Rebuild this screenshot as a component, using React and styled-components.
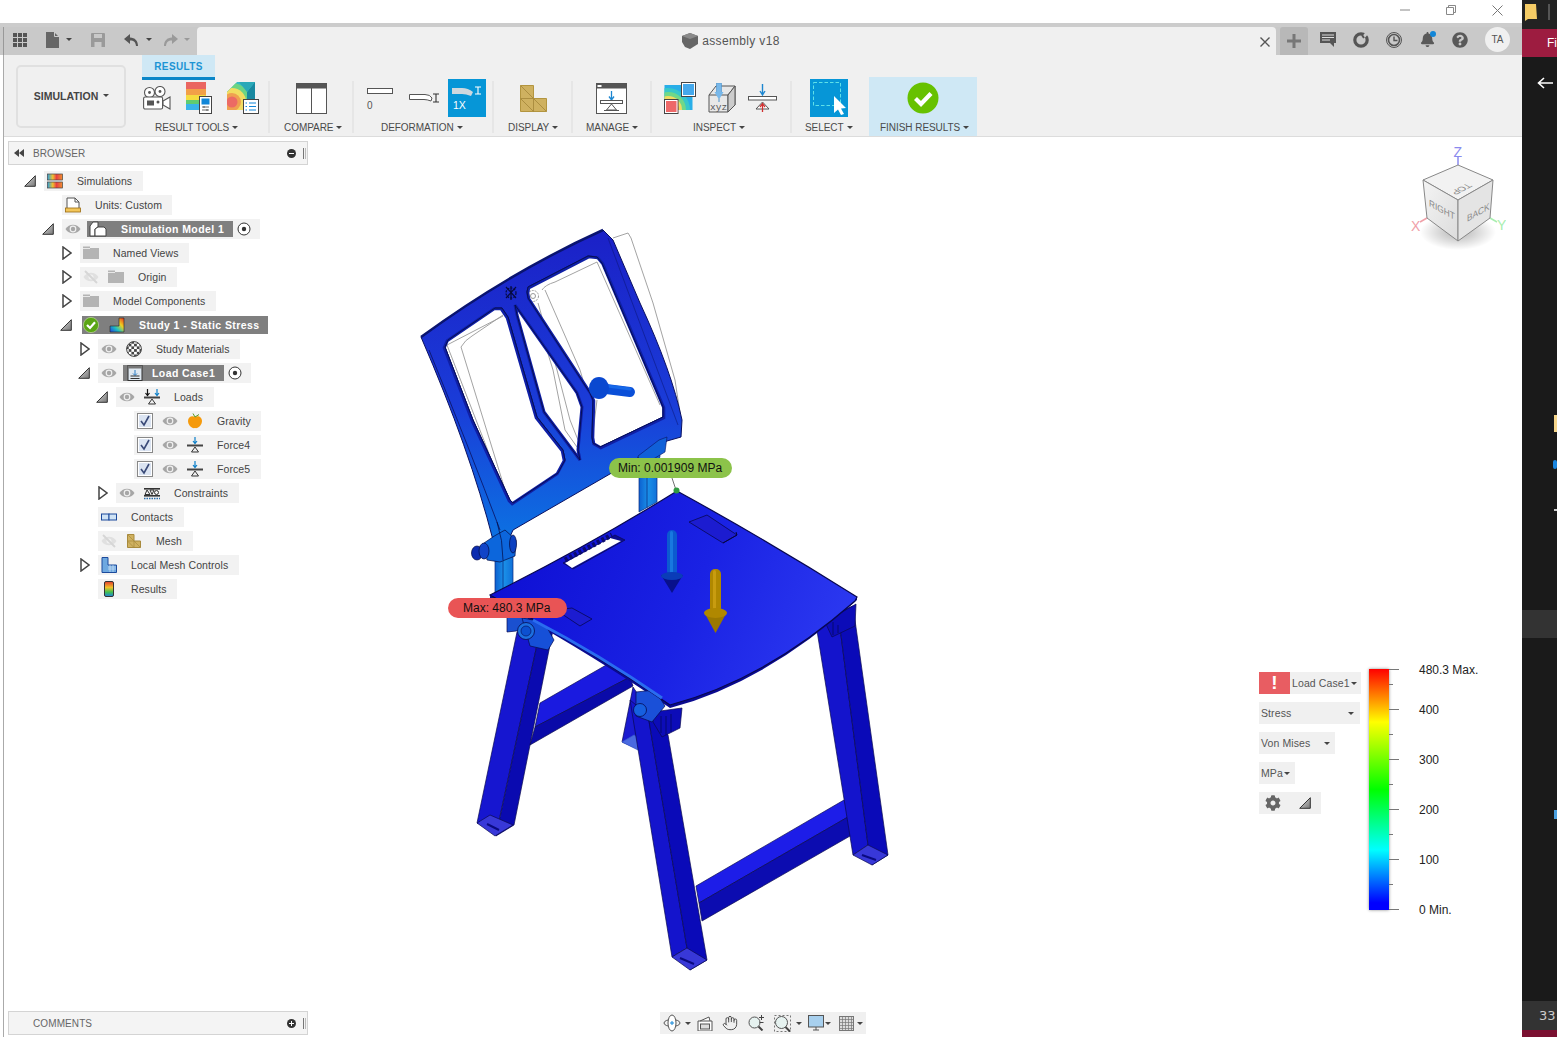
import React from 'react';
import styled, { createGlobalStyle } from 'styled-components';
import { Hand } from 'lucide-react';
import { FaCog, FaQuestionCircle, FaBell } from 'react-icons/fa';

const GlobalStyle = createGlobalStyle`
  html, body { margin: 0; padding: 0; background: #fff; overflow: hidden; }
  body { font-family: "Liberation Sans", Arial, sans-serif; color: #444; }
  * { box-sizing: border-box; }
`;

/* ---------- small icons ---------- */

const Svg = ({ w = 16, h = 16, vb, children }) => (
  <svg width={w} height={h} viewBox={vb || `0 0 ${w} ${h}`} style={{ display: 'block', flex: 'none' }}>{children}</svg>
);

const TriOpen = () => (
  <Svg w={12} h={12}>
    <defs>
      <linearGradient id="tri" x1="0" y1="0" x2="1" y2="1">
        <stop offset="0" stopColor="#ddd" />
        <stop offset="1" stopColor="#777" />
      </linearGradient>
    </defs>
    <polygon points="0.7,11.3 11.3,0.7 11.3,11.3" fill="url(#tri)" stroke="#333" strokeWidth="1" />
  </Svg>
);
const TriClosed = () => (
  <Svg w={10} h={14}>
    <polygon points="1,1 1,13 9,7" fill="#fff" stroke="#444" strokeWidth="1.5" />
  </Svg>
);
const Eye = () => (
  <Svg>
    <path d="M0.5 8 C4 2.2 12 2.2 15.5 8 C12 13.8 4 13.8 0.5 8Z" fill="#a6a6a6" />
    <circle cx="8" cy="8" r="3.4" fill="#f0f0f0" />
    <circle cx="8" cy="8" r="2.2" fill="#a6a6a6" />
  </Svg>
);
const EyeOff = () => (
  <Svg>
    <path d="M0.5 8 C4 2.2 12 2.2 15.5 8 C12 13.8 4 13.8 0.5 8Z" fill="#e0e0e0" />
    <circle cx="8" cy="8" r="2.5" fill="#f0f0f0" />
    <path d="M2 2 L14 14" stroke="#d6d6d6" strokeWidth="2" />
  </Svg>
);
const Folder = () => (
  <Svg>
    <path d="M0 1.5 H7 V3 H16 V14 H0Z" fill="#b4b4b4" />
    <path d="M0 3.5 H7" stroke="#e8e8e8" />
  </Svg>
);
const SimIcon = () => (
  <Svg>
    <defs>
      <linearGradient id="simg" x1="0" x2="1" y1="0" y2="0">
        <stop offset="0" stopColor="#2aa0e0" />
        <stop offset=".35" stopColor="#f0c030" />
        <stop offset=".6" stopColor="#e84040" />
        <stop offset="1" stopColor="#f09030" />
      </linearGradient>
    </defs>
    <rect x="0.5" y="1" width="15" height="6" fill="url(#simg)" stroke="#444" strokeWidth=".7" />
    <rect x="0.5" y="9" width="15" height="6" fill="url(#simg)" stroke="#444" strokeWidth=".7" />
  </Svg>
);
const UnitsIcon = () => (
  <Svg>
    <path d="M2 11 V1 H10 L14 5 V11" fill="#fff" stroke="#555" />
    <path d="M10 1 V5 H14" fill="none" stroke="#555" />
    <rect x="0.5" y="11" width="15" height="4" fill="#f3c65a" stroke="#9a6a10" strokeWidth=".8" />
  </Svg>
);
const BodyIcon = () => (
  <Svg w={18} h={16}>
    <path d="M1 5 L4 1 H9 V6 L6 8 V15 H1Z" fill="#fff" stroke="#444" />
    <path d="M6 8 L9 6 H15 L17 8 V15 H6Z" fill="#fff" stroke="#444" />
  </Svg>
);
const StudyCheck = () => (
  <Svg>
    <circle cx="8" cy="8" r="7.6" fill="#5aa514" stroke="#cde6a8" strokeWidth=".6" />
    <path d="M4 8 L7 11 L12 5.2" fill="none" stroke="#fff" strokeWidth="2.2" />
  </Svg>
);
const StudyIcon = () => (
  <Svg>
    <defs>
      <linearGradient id="stg" x1="0" x2="1" y1="1" y2="0">
        <stop offset="0" stopColor="#2040e0" />
        <stop offset=".35" stopColor="#20c0c0" />
        <stop offset=".65" stopColor="#f0d020" />
        <stop offset="1" stopColor="#e83020" />
      </linearGradient>
    </defs>
    <path d="M10 1 H15 V15 H1 V9 H10Z" fill="url(#stg)" stroke="#222" strokeWidth=".6" />
  </Svg>
);
const MaterialIcon = () => (
  <Svg>
    <defs>
      <pattern id="chk" width="5.4" height="5.4" patternUnits="userSpaceOnUse">
        <rect width="5.4" height="5.4" fill="#fff" />
        <rect width="2.7" height="2.7" fill="#444" />
        <rect x="2.7" y="2.7" width="2.7" height="2.7" fill="#444" />
      </pattern>
    </defs>
    <circle cx="8" cy="8" r="7.4" fill="url(#chk)" stroke="#444" />
  </Svg>
);
const LoadCaseIcon = () => (
  <Svg>
    <rect x="1" y="0.5" width="14" height="15" fill="#dfe8f0" stroke="#333" />
    <rect x="1" y="0.5" width="14" height="3" fill="#777" />
    <path d="M8 5 V10 M6 8.5 L8 10.5 L10 8.5" stroke="#2b7cc4" fill="none" />
    <path d="M3.5 11 H12.5 M3.5 13.5 H12.5" stroke="#333" />
  </Svg>
);
const LoadsIcon = ({ double }) => (
  <Svg>
    {double && <path d="M3.5 0 V6 M1.5 4 L3.5 6.5 L5.5 4" stroke="#111" fill="none" strokeWidth="1.2" />}
    <path d={double ? 'M13 0 V6 M11 4 L13 6.5 L15 4' : 'M8 0 V6 M6 4 L8 6.5 L10 4'} stroke="#0c7fc8" fill="none" strokeWidth="1.2" />
    <rect x="0" y="7.5" width="16" height="2" fill="#444" />
    <path d="M8 10 L4.5 15 H11.5Z" fill="#f0f0f0" stroke="#333" />
  </Svg>
);
const AppleIcon = () => (
  <Svg>
    <path d="M8 4 C11 2 15 4 15 8 C15 12 11 16 8 15 C5 16 1 12 1 8 C1 4 5 2 8 4Z" fill="#f59a0c" />
    <path d="M8 4 L6 0.5 M8 4 L12 1.5" stroke="#5a9a20" strokeWidth="1" />
  </Svg>
);
const ConstraintIcon = () => (
  <Svg>
    <rect x="0" y="3" width="16" height="1.6" fill="#333" />
    <rect x="0" y="10" width="16" height="1.6" fill="#333" />
    <path d="M3 5 L1 9.5 H6Z M8 9.5 L6 5 H10Z" fill="none" stroke="#333" />
    <circle cx="12.5" cy="7.5" r="2" fill="none" stroke="#333" />
    <path d="M0 13.5 H16" stroke="#2b6ca8" strokeDasharray="1.5 1" strokeWidth="1.5" />
  </Svg>
);
const ContactIcon = () => (
  <Svg>
    <rect x="0.5" y="5" width="7.5" height="6" fill="#cfe3f5" stroke="#1c4a9c" />
    <rect x="8" y="5" width="7.5" height="6" fill="#cfe3f5" stroke="#1c4a9c" />
  </Svg>
);
const MeshSmall = () => (
  <Svg w={14} h={14}>
    <path d="M0.5 0.5 H7 V7 H13.5 V13.5 H0.5Z" fill="#cfb160" stroke="#a88a3c" />
    <path d="M0.5 7 H7 V13.5 M0.5 0.5 L7 7 L13.5 13.5 M0.5 7 L7 13.5" stroke="#a88a3c" fill="none" strokeWidth=".7" />
  </Svg>
);
const LocalMeshIcon = () => (
  <Svg>
    <path d="M1 0.5 H7 V8 H15.5 V15.5 H1Z" fill="#6ea8e0" stroke="#1c4a9c" />
    <path d="M7 10 H15 M7 12 H15 M9 8 V15 M12 8 V15" stroke="#cfe3f5" strokeWidth=".7" />
  </Svg>
);
const ResultsIcon = () => (
  <Svg w={10} h={16}>
    <defs>
      <linearGradient id="resg" x1="0" x2="0" y1="0" y2="1">
        <stop offset="0" stopColor="#e23a2e" />
        <stop offset=".4" stopColor="#f0c028" />
        <stop offset=".7" stopColor="#40c050" />
        <stop offset="1" stopColor="#2080e0" />
      </linearGradient>
    </defs>
    <rect x=".5" y=".5" width="9" height="15" rx="1.5" fill="url(#resg)" stroke="#333" />
  </Svg>
);
const Radio = () => (
  <Svg w={14} h={14}>
    <circle cx="7" cy="7" r="6" fill="#fff" stroke="#333" />
    <circle cx="7" cy="7" r="2.2" fill="#333" />
  </Svg>
);
const CheckBox = () => (
  <Svg>
    <rect x=".5" y=".5" width="15" height="15" fill="#fff" stroke="#888" />
    <rect x="2" y="2" width="12" height="12" fill="#dbe4f2" />
    <path d="M4 8 L7 12 L12 3" fill="none" stroke="#3a4a78" strokeWidth="1.6" />
  </Svg>
);

/* ---------- ribbon icons ---------- */

const CameraIcon = () => (
  <Svg w={28} h={25}>
    <g fill="#fff" stroke="#555" strokeWidth="1.1">
      <circle cx="6.5" cy="6.5" r="5" />
      <circle cx="17" cy="5.5" r="5" />
      <rect x="0.6" y="11" width="19" height="12" rx="1.5" />
      <path d="M20 15 L27 11 V23 L20 19Z" />
    </g>
    <circle cx="6.5" cy="6.5" r="1.4" fill="#555" />
    <circle cx="17" cy="5.5" r="1.4" fill="#555" />
    <rect x="4" y="14.5" width="7" height="5" fill="#555" />
    <circle cx="15" cy="16" r="1.5" fill="#555" />
  </Svg>
);
const LegendIcon = () => (
  <Svg w={26} h={32}>
    <rect x="0" y="0" width="20" height="7" fill="#ea6560" />
    <rect x="0" y="7" width="20" height="6" fill="#f2a048" />
    <rect x="0" y="13" width="20" height="5" fill="#f5dc40" />
    <rect x="0" y="18" width="20" height="4" fill="#60cc70" />
    <rect x="0" y="22" width="20" height="6" fill="#38b4ea" />
    <rect x="13.5" y="14.5" width="12" height="17" fill="#fff" stroke="#444" />
    <rect x="15.5" y="16.5" width="8" height="6" fill="#1186d8" />
    <path d="M16 25 H23 M16 28 H23 M18 24 V26 M21 27 V29" stroke="#444" strokeWidth=".8" />
  </Svg>
);
const ContourIcon = () => (
  <Svg w={32} h={32}>
    <defs>
      <clipPath id="ctc">
        <path d="M0 10 L10 0 H28 V22 L20 28 H0Z" />
      </clipPath>
    </defs>
    <g clipPath="url(#ctc)">
      <rect width="32" height="32" fill="#34bcc8" />
      <circle cx="5" cy="20" r="19" fill="#6cd484" />
      <circle cx="5" cy="20" r="14" fill="#f2dc60" />
      <circle cx="5" cy="20" r="9" fill="#f0a050" />
      <circle cx="5" cy="20" r="5.5" fill="#ec6a64" />
      <path d="M28 0 V22 L20 28 V10Z" fill="#1888a0" />
      <path d="M12 0 H28 L20 10Z" fill="#2aa8b8" />
    </g>
    <rect x="16.5" y="17.5" width="15" height="14" fill="#fff" stroke="#444" />
    <path d="M22 21 H29 M22 24.5 H29 M22 28 H29" stroke="#1186d8" />
    <path d="M18.5 21 H20 M18.5 24.5 H20 M18.5 28 H20" stroke="#1186d8" />
  </Svg>
);
const CompareIcon = () => (
  <Svg w={31} h={31}>
    <rect x=".5" y=".5" width="30" height="30" fill="#fff" stroke="#555" />
    <rect x=".5" y=".5" width="30" height="5" fill="#555" />
    <path d="M15.5 5 V31" stroke="#555" />
  </Svg>
);
const DeformZero = () => (
  <Wrap0>
    <Svg w={27} h={7}><rect x=".5" y=".5" width="25" height="5" fill="#fff" stroke="#555" /></Svg>
    <span>0</span>
  </Wrap0>
);
const DeformBend = () => (
  <Svg w={31} h={10}>
    <path d="M.5 1.5 H16 Q21 1.5 23 5 L22 8 Q18 6.5 15 6.5 H.5Z" fill="#fff" stroke="#555" />
    <path d="M24 1 H30 M27 1 V9 M24 9 H30" stroke="#333" strokeWidth="1.1" fill="none" />
  </Svg>
);
const DeformOne = () => (
  <BlueTile $deform>
    <Svg w={38} h={38}>
      <path d="M4 9 H14 Q20 9 25 13 L23 17 Q18 15 14 15 H4Z" fill="#cfd8de" />
      <path d="M27 8 H33 M30 8 V15 M27 15 H33" stroke="#fff" strokeWidth="1.1" fill="none" />
      <text x="5" y="30" fontSize="10.5" fill="#fff" fontFamily="Liberation Sans">1X</text>
    </Svg>
  </BlueTile>
);
const MeshBig = () => (
  <Svg w={27} h={27}>
    <path d="M.5 .5 H13.5 V13.5 H26.5 V26.5 H.5Z" fill="#cfb160" stroke="#b3953f" />
    <path d="M.5 13.5 H13.5 V26.5 M.5 .5 L13.5 13.5 L26.5 26.5 M.5 13.5 L13.5 26.5" stroke="#a88a3c" fill="none" strokeWidth=".9" />
  </Svg>
);
const ManageIcon = () => (
  <Svg w={31} h={31}>
    <rect x=".5" y=".5" width="30" height="30" fill="#fff" stroke="#555" />
    <rect x=".5" y=".5" width="30" height="5" fill="#555" />
    <rect x="1.5" y="2" width="4" height="2" fill="#fff" />
    <path d="M15.5 8 V16 M13 13.5 L15.5 17 L18 13.5" fill="none" stroke="#1c86d0" strokeWidth="1.3" />
    <rect x="4.5" y="17.5" width="22" height="3" fill="#fff" stroke="#555" />
    <path d="M15.5 21 L10.5 27 H20.5Z" fill="#fff" stroke="#555" />
    <path d="M8 27.5 H23" stroke="#555" />
  </Svg>
);
const InspectMap = () => (
  <Svg w={32} h={32}>
    <defs>
      <clipPath id="inc"><rect x="0.5" y="3" width="28" height="25" /></clipPath>
    </defs>
    <g clipPath="url(#inc)">
      <rect width="32" height="32" fill="#28aee8" />
      <circle cx="4" cy="28" r="22" fill="#38c8c8" />
      <circle cx="4" cy="28" r="18" fill="#70d888" />
      <circle cx="4" cy="28" r="14" fill="#f2dc60" />
      <circle cx="4" cy="28" r="11" fill="#f0a050" />
    </g>
    <rect x="17.5" y=".5" width="14" height="14" fill="#44a8ec" stroke="#444" />
    <rect x="18.5" y="1.5" width="12" height="12" fill="none" stroke="#fff" />
    <rect x=".5" y="17.5" width="13.5" height="14" fill="#ee6868" stroke="#444" />
    <rect x="1.5" y="18.5" width="11.5" height="12" fill="none" stroke="#fff" />
  </Svg>
);
const InspectXyz = () => (
  <Svg w={28} h={30}>
    <path d="M1 12 L8 3 H27 V22 L20 29 H1Z" fill="#e8e8e8" stroke="#555" />
    <path d="M1 12 H20 V29 M20 12 L27 3" fill="none" stroke="#555" />
    <path d="M20 12 L27 3 V22 L20 29Z" fill="#ccc" stroke="#555" />
    <rect x="8.5" y="0" width="5" height="11" fill="#78b8ea" stroke="#4a90c8" strokeWidth=".6" />
    <path d="M6.5 9 H15.5 L12 15 H10Z" fill="#78b8ea" />
    <path d="M11 15 V19" stroke="#4a90c8" />
    <text x="2" y="27" fontSize="9.5" fill="#555" fontFamily="Liberation Mono">xyz</text>
  </Svg>
);
const InspectForce = () => (
  <Svg w={29} h={28}>
    <path d="M14.5 0 V10 M12 7 L14.5 11 L17 7" fill="none" stroke="#1c86d0" strokeWidth="1.4" />
    <rect x=".5" y="12.5" width="28" height="3.5" fill="#fff" stroke="#555" />
    <path d="M14.5 18 L8 25 H21Z" fill="#fff" stroke="#555" />
    <path d="M14.5 28 V20 M12 23 L14.5 19.5 L17 23" fill="none" stroke="#d03030" strokeWidth="1.3" />
  </Svg>
);
const SelectIcon = () => (
  <BlueTile>
    <Svg w={38} h={38}>
      <rect x="3.5" y="3.5" width="27" height="23" fill="none" stroke="#5fe0e8" strokeDasharray="3.5 2" />
      <path d="M24 17 V34 L28 30.5 L31 36 L34 35 L31 29.5 L36 29Z" fill="#fff" />
    </Svg>
  </BlueTile>
);
const FinishIcon = () => (
  <Svg w={32} h={32}>
    <circle cx="16" cy="16" r="15.5" fill="#67c100" />
    <path d="M8.5 16.5 L14 22 L24 11.5" fill="none" stroke="#fff" strokeWidth="4.2" />
  </Svg>
);

/* ---------- quick access ---------- */

const GridIcon = () => (
  <Svg w={14} h={14}>
    {[0, 5, 10].map((y) => [0, 5, 10].map((x) => <rect key={`${x}${y}`} x={x} y={y} width="4" height="4" fill="#555" />))}
  </Svg>
);
const DocIcon = () => (
  <Svg w={13} h={16}>
    <path d="M0 0 H8 L13 5 V16 H0Z" fill="#666" />
    <path d="M8.5 0 V4.5 H13" stroke="#ccc" fill="none" />
  </Svg>
);
const SaveIcon = () => (
  <Svg w={14} h={14}>
    <path d="M0 1 Q0 0 1 0 H13 Q14 0 14 1 V14 H0Z" fill="#9a9a9a" />
    <rect x="3" y="1" width="8" height="4" fill="#c9c9c9" />
    <rect x="3.5" y="9" width="7" height="5" fill="#c9c9c9" />
  </Svg>
);
const UndoIcon = ({ color, flip }) => (
  <Svg w={14} h={12}>
    <g transform={flip ? 'translate(14,0) scale(-1,1)' : undefined}>
      <path d="M6 0 L0 5 L6 10 V6.5 C10 6.5 11.5 8 12 12 L14 12 C14 7 11 3.5 6 3.5Z" fill={color} />
    </g>
  </Svg>
);

/* ---------- layout ---------- */

const Page = styled.div`
  width: 1557px;
  height: 1037px;
  display: flex;
  overflow: hidden;
`;
const Main = styled.div`
  width: 1522px;
  display: flex;
  flex-direction: column;
`;
const WindowBar = styled.div`
  height: 23px;
  background: #fff;
  display: flex;
  justify-content: flex-end;
  padding-right: 2px;
`;
const WinBtn = styled.div`
  width: 46px;
  display: flex;
  align-items: center;
  justify-content: center;
  padding-bottom: 3px;
`;
const TabBar = styled.div`
  height: 32px;
  flex: none;
  border-top: 4px solid #ccc;
  background: linear-gradient(to right, #c9c9c9 3px, #999 3px, #999 4px, #c9c9c9 4px);
  display: flex;
  align-items: stretch;
`;
const Quick = styled.div`
  width: 197px;
  display: flex;
  align-items: center;
  padding-left: 13px;
  padding-bottom: 3px;
`;
const QuickItem = styled.span`
  display: flex;
  align-items: center;
  margin-left: ${(p) => p.$ml || 0}px;
`;
const Caret = styled.i`
  display: inline-block;
  flex: none;
  width: 0;
  height: 0;
  border-left: ${(p) => p.$s || 3}px solid transparent;
  border-right: ${(p) => p.$s || 3}px solid transparent;
  border-top: ${(p) => (p.$s || 3) + 0.5}px solid ${(p) => p.$c || '#444'};
  margin-left: ${(p) => p.$ml ?? 3}px;
`;
const DocTab = styled.div`
  width: 1079px;
  background: #f0f0f0;
  border-radius: 4px 4px 0 0;
  display: flex;
  align-items: center;
  padding-left: 12px;
`;
const DocTitle = styled.div`
  flex: 1;
  display: flex;
  align-items: center;
  justify-content: center;
  gap: 4px;
  font-size: 12px;
  letter-spacing: 0.35px;
  color: #555;
  padding-bottom: 1px;
`;
const CloseTab = styled.div`
  width: 23px;
  display: flex;
  justify-content: center;
  padding-top: 2px;
`;
const PlusBtn = styled.div`
  width: 28px;
  margin-left: 4px;
  background: #b8b8b8;
  border-radius: 3px 3px 0 0;
  display: flex;
  align-items: center;
  justify-content: center;
`;
const TopIcons = styled.div`
  display: flex;
  align-items: center;
  padding-left: 3.5px;
  padding-bottom: 3px;
`;
const TopIcon = styled.div`
  width: 33px;
  display: flex;
  justify-content: center;
  color: #595959;
  position: relative;
`;
const Dot = styled.b`
  position: absolute;
  top: -1px;
  left: 19px;
  width: 6px;
  height: 6px;
  border-radius: 50%;
  background: #1186d8;
`;
const Avatar = styled.div`
  width: 25px;
  height: 25px;
  margin-left: 5px;
  border-radius: 50%;
  background: #f0f0f0;
  display: flex;
  align-items: center;
  justify-content: center;
  font-size: 10px;
  color: #555;
`;
const Body = styled.div`
  flex: 1;
  margin-left: 3px;
  border-left: 1px solid #aaa;
  display: flex;
  flex-direction: column;
  min-height: 0;
`;

/* ribbon */

const Ribbon = styled.div`
  height: 82px;
  flex: none;
  background: #f0f0f0;
  border-bottom: 1px solid #dcdcdc;
  display: flex;
  padding-left: 12px;
`;
const ModeButton = styled.div`
  width: 110px;
  height: 63px;
  margin-top: 10px;
  margin-right: 16px;
  padding: 0 0 2px 1px;
  border: 2px solid #e0e0e0;
  border-radius: 5px;
  display: flex;
  align-items: center;
  justify-content: center;
  font-size: 10.5px;
  font-weight: bold;
  color: #444;
`;
const RibbonBody = styled.div`
  display: flex;
  flex-direction: column;
`;
const ResultsTab = styled.div`
  width: 73px;
  height: 25px;
  margin-bottom: -3px;
  background: #cfe8f5;
  border-bottom: 3px solid #0a86c8;
  display: flex;
  align-items: center;
  justify-content: center;
  font-size: 10px;
  font-weight: bold;
  letter-spacing: 0.35px;
  color: #1c94d4;
  position: relative;
  z-index: 1;
`;
const Groups = styled.div`
  display: flex;
  height: 59px;
`;
const Group = styled.div`
  width: ${(p) => p.$w}px;
  position: relative;
  background: ${(p) => (p.$on ? '#cfe8f5' : 'transparent')};
  display: flex;
  flex-direction: column;
  &::after {
    content: '';
    display: ${(p) => (p.$last ? 'none' : 'block')};
    position: absolute;
    right: 0;
    top: 4px;
    bottom: 3px;
    width: 2px;
    background: #e6e6e6;
  }
`;
const IconRow = styled.div`
  height: 42px;
  display: flex;
  align-items: center;
  padding-left: ${(p) => p.$pl}px;
  gap: ${(p) => p.$gap || 0}px;
`;
const GroupLabel = styled.div`
  display: flex;
  align-items: center;
  height: 16px;
  padding-left: ${(p) => p.$pl}px;
  font-size: 10px;
  letter-spacing: -0.05px;
  color: #4a4a4a;
  white-space: nowrap;
`;
const BlueTile = styled.div`
  width: 38px;
  height: 38px;
  background: #0696d7;
  flex: none;
`;
const Wrap0 = styled.div`
  display: flex;
  flex-direction: column;
  font-size: 10px;
  color: #555;
  line-height: 11px;
  gap: 5px;
  padding-top: 3px;
`;

/* viewport */

const Viewport = styled.div`
  flex: 1;
  position: relative;
  background: #fff;
  overflow: hidden;
`;
const Scene = styled.svg`
  position: absolute;
  left: -4px;
  top: 0;
`;
const Panel = styled.div`
  position: absolute;
  left: 4px;
  top: 4px;
  width: 300px;
`;
const PanelHead = styled.div`
  height: 24px;
  display: flex;
  align-items: center;
  background: #f4f4f4;
  border: 1px solid #d4d4d4;
  font-size: 10px;
  letter-spacing: 0.1px;
  color: #666;
  padding-left: 5px;
`;
const HeadTitle = styled.span`
  flex: 1;
  padding-left: ${(p) => p.$pl}px;
`;
const Handle = styled.span`
  width: 3px;
  height: 11px;
  margin: 0 1px 0 7px;
  border-left: 1px solid #777;
  border-right: 1px solid #bbb;
`;
const Tree = styled.div`
  margin-top: 4px;
  padding-left: 18px;
`;
const Row = styled.div`
  height: 24px;
  display: flex;
  align-items: center;
  padding-left: ${(p) => p.$depth * 18}px;
`;
const Toggle = styled.div`
  width: 18px;
  height: 20px;
  flex: none;
  display: flex;
  align-items: center;
  justify-content: ${(p) => (p.$open ? 'flex-end' : 'flex-start')};
  padding-right: ${(p) => (p.$open ? 8 : 0)}px;
`;
const Chip = styled.div`
  height: ${(p) => (p.$dark ? 18 : 20)}px;
  display: flex;
  align-items: center;
  margin-left: ${(p) => (p.$dark ? 2 : 0)}px;
  padding: 0 ${(p) => (p.$dark ? 8 : p.$radio ? 8.5 : 10.5)}px 0 ${(p) => (p.$dark ? 1 : 3)}px;
  background: ${(p) => (p.$dark ? '#7f7f7f' : '#f2f2f2')};
  font-size: 10.5px;
  color: ${(p) => (p.$dark ? '#fff' : '#444')};
  font-weight: ${(p) => (p.$dark ? 'bold' : 'normal')};
  letter-spacing: ${(p) => (p.$dark ? '0.42px' : '0.08px')};
  white-space: nowrap;
`;
const Slot = styled.span`
  width: 16px;
  flex: none;
  display: flex;
  justify-content: center;
  margin-right: ${(p) => p.$gap ?? 9}px;
`;
const DarkLabel = styled.div`
  height: 16px;
  display: flex;
  align-items: center;
  background: #7f7f7f;
  color: #fff;
  font-weight: bold;
  letter-spacing: 0.42px;
  padding: 0 9px 0 ${(p) => p.$pl}px;
  margin-left: -3px;
  margin-right: 4px;
`;
const Pill = styled.div`
  position: absolute;
  left: ${(p) => p.$x - 4}px;
  top: ${(p) => p.$y - 137}px;
  width: ${(p) => p.$w}px;
  height: 20px;
  border-radius: 10px;
  background: ${(p) => p.$bg};
  display: flex;
  align-items: center;
  padding-left: ${(p) => p.$pad}px;
  font-size: 12px;
  color: #111;
`;
const CubeWrap = styled.svg`
  position: absolute;
  right: 16px;
  top: 5px;
`;

/* legend */

const Legend = styled.div`
  position: absolute;
  left: 1255px;
  top: 530px;
  display: flex;
`;
const LegendControls = styled.div`
  width: 110px;
  padding-top: 5px;
  display: flex;
  flex-direction: column;
  align-items: flex-start;
  gap: 8px;
`;
const LegendRow = styled.div`
  display: flex;
`;
const LegendBox = styled.div`
  width: ${(p) => p.$w}px;
  height: 22px;
  background: #f0f0f0;
  display: flex;
  align-items: center;
  justify-content: space-between;
  padding: 0 ${(p) => p.$pr ?? 6}px 0 ${(p) => p.$pl ?? 2}px;
  font-size: 10.5px;
  color: #555;
  letter-spacing: 0.1px;
  white-space: nowrap;
`;
const AlertBox = styled.div`
  width: 31px;
  height: 22px;
  background: #e85d62;
  display: flex;
  align-items: center;
  justify-content: center;
  color: #fff;
  font-weight: bold;
  font-size: 19px;
  flex: none;
`;
const Bar = styled.div`
  width: 20px;
  height: 241px;
  margin-top: 2px;
  background: linear-gradient(to bottom, #f00 0%, #ff8000 11%, #ff0 22%, #0f0 50%, #0ff 75%, #00f 97%, #00f 100%);
  box-shadow: 0 0 3px rgba(0, 0, 0, 0.45);
  flex: none;
`;
const Ticks = styled.div`
  position: relative;
  width: 30px;
`;
const Tick = styled.div`
  height: 1px;
  width: ${(p) => (p.$major ? 10 : 4)}px;
  background: #777;
  position: absolute;
  top: ${(p) => p.$y}px;
`;
const Scale = styled.div`
  height: 255px;
  margin-top: -4px;
  display: flex;
  flex-direction: column;
`;
const ScaleText = styled.div`
  height: ${(p) => p.$h}px;
  font-size: 12px;
  line-height: 14px;
  color: #222;
  white-space: nowrap;
`;

/* bottom bars */

const NavBar = styled.div`
  position: absolute;
  left: 656px;
  bottom: 3px;
  width: 206px;
  height: 22px;
  background: #f0f0f0;
  display: flex;
  align-items: center;
  padding-left: 3px;
`;
const NavItem = styled.span`
  display: flex;
  align-items: center;
  margin-right: ${(p) => p.$mr}px;
`;
const CommentsBar = styled(PanelHead)`
  position: absolute;
  left: 4px;
  bottom: 2px;
  width: 300px;
`;
const HeadSpacer = styled.span`
  width: 10px;
`;
const Nudge = styled.span`
  margin-left: ${(p) => p.$ml}px;
`;

/* right strip of the other window */

const Strip = styled.div`
  width: 35px;
  position: relative;
  background: #1a1a1a;
  display: flex;
  flex-direction: column;
  overflow: hidden;
`;
const StripTop = styled.div`
  height: 29px;
  background: #222;
  display: flex;
  align-items: center;
  gap: 11px;
  padding: 0 0 5px 3px;
`;
const StripBand = styled.div`
  height: 28px;
  background: #9d1c40;
  color: #fff;
  font-size: 12px;
  display: flex;
  align-items: center;
  padding-left: 25px;
`;
const StripBack = styled.div`
  margin: 20px 0 0 15px;
`;
const StripMark = styled.div`
  position: absolute;
  right: 0;
  top: ${(p) => p.$y}px;
  width: ${(p) => p.$w}px;
  height: ${(p) => p.$h}px;
  background: ${(p) => p.$c};
  border-radius: ${(p) => p.$r || 0}px;
`;
const StripStatus = styled.div`
  margin-top: auto;
  height: 29px;
  margin-bottom: 7px;
  background: #333;
  color: #ccc;
  font-size: 13px;
  font-family: "DejaVu Sans", sans-serif;
  display: flex;
  align-items: center;
  padding-left: 17px;
`;
const StripFoot = styled.div`
  position: absolute;
  left: 0;
  right: 0;
  bottom: 0;
  height: 7px;
  background: #7a1030;
`;

/* ---------- tree data ---------- */

const tree = [
  { d: 0, t: 'open', parts: [<SimIcon />], label: 'Simulations' },
  { d: 1, parts: [<UnitsIcon />], label: 'Units: Custom' },
  { d: 1, t: 'open', eye: 'on', dark: { pl: 5, gap: 15, icon: <BodyIcon /> }, label: 'Simulation Model 1' },
  { d: 2, t: 'closed', parts: [<Folder />], label: 'Named Views' },
  { d: 2, t: 'closed', eye: 'off', parts: [<Folder />], label: 'Origin' },
  { d: 2, t: 'closed', parts: [<Folder />], label: 'Model Components' },
  { d: 2, t: 'open', study: true, label: 'Study 1 - Static Stress' },
  { d: 3, t: 'closed', eye: 'on', parts: [<MaterialIcon />], label: 'Study Materials' },
  { d: 3, t: 'open', eye: 'on', dark: { pl: 6, gap: 9, icon: <LoadCaseIcon /> }, label: 'Load Case1' },
  { d: 4, t: 'open', eye: 'on', parts: [<LoadsIcon double />], label: 'Loads' },
  { d: 5, check: true, eye: 'on', parts: [<AppleIcon />], label: 'Gravity' },
  { d: 5, check: true, eye: 'on', parts: [<LoadsIcon />], label: 'Force4' },
  { d: 5, check: true, eye: 'on', parts: [<LoadsIcon />], label: 'Force5' },
  { d: 4, t: 'closed', eye: 'on', parts: [<ConstraintIcon />], label: 'Constraints' },
  { d: 3, parts: [<ContactIcon />], label: 'Contacts' },
  { d: 3, eye: 'off', parts: [<MeshSmall />], label: 'Mesh' },
  { d: 3, t: 'closed', parts: [<LocalMeshIcon />], label: 'Local Mesh Controls' },
  { d: 3, parts: [<ResultsIcon />], label: 'Results' },
];

const TreeRow = ({ row }) => (
  <Row $depth={row.d}>
    <Toggle $open={row.t === 'open'}>
      {row.t === 'open' && <TriOpen />}
      {row.t === 'closed' && <TriClosed />}
    </Toggle>
    {row.study ? (
      <Chip $dark>
        <Slot $gap={10}><StudyCheck /></Slot>
        <Slot $gap={14}><StudyIcon /></Slot>
        {row.label}
      </Chip>
    ) : (
      <Chip $radio={!!row.dark}>
        {row.check && <Slot><CheckBox /></Slot>}
        {row.eye && <Slot>{row.eye === 'on' ? <Eye /> : <EyeOff />}</Slot>}
        {row.dark ? (
          <>
            <DarkLabel $pl={row.dark.pl - 2}>
              <Slot $gap={row.dark.gap}>{row.dark.icon}</Slot>
              {row.label}
            </DarkLabel>
            <Radio />
          </>
        ) : (
          <>
            {row.parts.map((p, i) => <Slot key={i} $gap={14}>{p}</Slot>)}
            {row.label}
          </>
        )}
      </Chip>
    )}
  </Row>
);

/* ---------- chair drawing, page coordinates ---------- */

const Q = ({ pts, fill, stroke = '#0a0a50', sw = 0.7 }) => (
  <polygon points={pts} fill={fill} stroke={stroke} strokeWidth={sw} strokeLinejoin="round" />
);

const holeLeft = 'M445,347 L448,340 L495,308 L502,308 L508,317 L537,417 L563,450 L565,460 L558,473 L513,503 L510,500 L473,420 Z';
const holeRight = 'M527,292 L528,287 L588,256 L597,257 L602,263 L663,407 L663,417 L600,447 L593,443 L592,437 L593,400 L590,393 L528,298 Z';
const holeMid = 'M515,305 L577,393 L582,407 L578,450 L580,460 L562,436 L544,412 L517,315 Z';

const Chair = () => (
  <Scene width="1522" height="900" viewBox="0 137 1522 900">
    <defs>
      <linearGradient id="frameG" gradientUnits="userSpaceOnUse" x1="0" y1="240" x2="0" y2="540">
        <stop offset="0" stopColor="#1b22c8" />
        <stop offset=".55" stopColor="#1a3cd8" />
        <stop offset="1" stopColor="#0c72e2" />
      </linearGradient>
      <linearGradient id="seatG" gradientUnits="userSpaceOnUse" x1="520" y1="530" x2="830" y2="660">
        <stop offset="0" stopColor="#0f10d4" />
        <stop offset=".55" stopColor="#1a22e4" />
        <stop offset="1" stopColor="#2b38f0" />
      </linearGradient>
      <linearGradient id="postG" x1="0" x2="1" y1="0" y2="0">
        <stop offset="0" stopColor="#0c60d0" />
        <stop offset=".5" stopColor="#1a90e8" />
        <stop offset="1" stopColor="#1070d8" />
      </linearGradient>
    </defs>

    {/* undeformed ghost */}
    <g fill="none" stroke="#999" strokeWidth="0.9">
      <path d="M613,238 L628,233 L631,238 L653,303 L675,380 L680,413" />
      <path d="M542,290 Q545,285 555,282 L597,262 L660,405" />
      <path d="M447,345 L503,316 M461,347 Q465,340 472,336 L503,315" />
      <path d="M461,347 L506,493 M447,345 L507,500" />
      <path d="M533,305 L553,370 L565,430 L577,447 M538,303 L557,370 L570,420 L578,440" />
      <path d="M545,290 L580,370 L589,400 M597,400 L592,440" />
    </g>
    <g fill="none" stroke="#999" strokeWidth="1">
      <circle cx="533" cy="296" r="5.5" strokeDasharray="2 1" />
      <circle cx="533" cy="296" r="2.5" />
    </g>

    {/* back posts behind the seat */}
    <polygon points="495,555 513,548 513,596 495,600" fill="url(#postG)" stroke="#0a2a80" strokeWidth=".7" />
    <path d="M503,552 V598" stroke="#0a2a80" strokeWidth=".7" />
    <polygon points="639,470 657,470 657,502 639,512" fill="url(#postG)" stroke="#0a2a80" strokeWidth=".7" />
    <path d="M647,470 V508" stroke="#0a2a80" strokeWidth=".7" />
    <ellipse cx="648" cy="456" rx="12" ry="10" fill="#1060d8" stroke="#0a2a80" strokeWidth=".7" />
    <ellipse cx="651" cy="454" rx="6" ry="7" fill="#2a80e8" stroke="#0a2a80" strokeWidth=".5" />

    {/* back frame */}
    <path
      d={`M421,337 Q510,272 603,230 L613,240 L640,303 Q672,372 682,420 L681,437 L667,441 L513,530 L505,548 L493,540 Q470,450 421,337 Z ${holeLeft} ${holeRight} ${holeMid}`}
      fill="url(#frameG)"
      fillRule="evenodd"
      stroke="#0a1060"
      strokeWidth="1"
    />
    <polygon points="659,440 667,437 665,452 640,467 638,456" fill="#1060d8" stroke="#0a1060" strokeWidth=".6" />
    <g fill="none">
      <path d={holeLeft} stroke="#0f1fa6" strokeWidth="3" transform="translate(-.8,.8)" />
      <path d={holeRight} stroke="#0f1fa6" strokeWidth="3" transform="translate(.8,.8)" />
      <path d={holeMid} stroke="#0f1fa6" strokeWidth="3" />
      <path d={holeLeft} stroke="#050a40" strokeWidth=".8" />
      <path d={holeRight} stroke="#050a40" strokeWidth=".8" />
      <path d={holeMid} stroke="#050a40" strokeWidth=".8" />
      <path d="M421,337 Q510,272 603,230" stroke="#0a1470" strokeWidth="2.5" />
      <path d="M429,350 Q470,450 500,530" stroke="#0a1060" strokeWidth=".8" />
      <path d="M608,238 L678,425" stroke="#0a1470" strokeWidth="1" opacity=".5" />
    </g>

    {/* pinion */}
    <g fill="none" stroke="#050a40" strokeWidth="1.2">
      <circle cx="511" cy="293" r="5" strokeDasharray="2 1.2" />
      <path d="M506,287 L516,298 M516,287 L506,298 M511,286 V300" />
    </g>

    {/* handle */}
    <path d="M598,388 L630,392" stroke="#0a4fd8" strokeWidth="10" strokeLinecap="round" />
    <path d="M600,385 L630,389" stroke="#1668e8" strokeWidth="3" strokeLinecap="round" />
    <ellipse cx="599" cy="388" rx="10" ry="11" fill="#0a48d0" />

    {/* hub and knob on the left rail */}
    <path d="M484,543 Q495,535 505,530 L516,540 L515,556 L500,562 L487,560 Z" fill="#0c66dc" stroke="#050a40" strokeWidth=".7" />
    <ellipse cx="513" cy="544" rx="3.5" ry="9" fill="#0c40c0" stroke="#050a40" strokeWidth=".7" />
    <path d="M497,522 Q503,540 503,560" fill="none" stroke="#050a40" strokeWidth=".7" />
    <ellipse cx="477" cy="553" rx="5.5" ry="7" fill="#0c2cb0" stroke="#050a40" strokeWidth=".7" />
    <ellipse cx="484" cy="551" rx="5" ry="8" fill="#1044c8" stroke="#050a40" strokeWidth=".7" />

    {/* back crossbar */}
    <Q pts="540,703 608,664 630,677 535,727" fill="#1a1ae0" />
    <Q pts="535,727 630,677 633,686 530,745" fill="#0a0aa8" />

    {/* rear-left leg */}
    <Q pts="517,632 538,640 497,830 477,823" fill="#1616d0" />
    <Q pts="538,640 553,630 514,825 496,836" fill="#0a0ab0" />
    <Q pts="477,823 490,815 513,825 495,836" fill="#3838d8" />
    <path d="M487,824 L499,830" stroke="#0a0a80" strokeWidth="2" />

    {/* centre bracket */}
    <Q pts="633,687 622,742 640,750 655,720" fill="#1a1ad0" />
    <Q pts="622,742 634,735 652,745 640,751" fill="#4a6ae0" stroke="#3a5ad0" />

    {/* crossbar front */}
    <Q pts="696,886 844,800 860,810 699,903" fill="#1d1de8" />
    <Q pts="699,903 860,810 864,828 702,921" fill="#0c0cb0" />

    {/* right leg */}
    <Q pts="814,612 838,612 868,845 853,855" fill="#1414cc" />
    <Q pts="838,612 853,606 888,855 872,865 868,845" fill="#0a0ab8" />
    <Q pts="853,855 868,845 888,855 872,865" fill="#3838d8" />
    <path d="M862,855 L876,860" stroke="#0a0a80" strokeWidth="2" />

    {/* front leg */}
    <Q pts="630,700 648,715 687,948 672,957" fill="#1414cc" />
    <Q pts="648,715 668,735 707,960 690,970 687,948" fill="#0a0ab8" />
    <Q pts="672,957 687,948 707,960 690,970" fill="#3838d8" />
    <path d="M680,958 L694,964" stroke="#0a0a80" strokeWidth="2" />

    {/* seat underside */}
    <Q pts="653,712 682,708 680,728 662,737 653,722" fill="#0c0cb8" />
    <path d="M661,716 V733 M666,716 V735 M671,714 V732" stroke="#050a50" strokeWidth=".7" />
    <Q pts="825,622 856,604 855,626 832,637" fill="#0c0cb8" />
    <path d="M838,625 V633 M833,622 V635" stroke="#050a50" strokeWidth=".7" />
    <path d="M490,598 Q590,653 670,708 Q765,683 857,600 L857,597 L490,595 Z" fill="#0a0a90" />
    <Q pts="507,605 530,612 525,630 507,632" fill="#1a50d0" />

    {/* pivots */}
    <polygon points="522,618 544,622 554,640 548,650 530,646" fill="#1650d8" stroke="#050a50" strokeWidth=".7" />
    <circle cx="526" cy="631" r="8.5" fill="#1c70e0" stroke="#050a50" strokeWidth=".8" />
    <circle cx="526" cy="631" r="5" fill="#0c50d0" stroke="#050a50" strokeWidth=".6" />
    <polygon points="636,692 655,690 665,706 652,722 636,716" fill="#1a50d8" stroke="#050a50" strokeWidth=".7" />
    <circle cx="640" cy="710" r="6.5" fill="#1660e0" stroke="#050a50" strokeWidth=".8" />

    {/* seat */}
    <path
      d="M490,595 Q590,545 677,491 Q770,542 857,597 L855,601 Q765,680 670,705 Q590,650 490,595 Z"
      fill="url(#seatG)"
      stroke="#080850"
      strokeWidth="1.2"
    />
    <path d="M533,620 Q600,655 662,698" fill="none" stroke="#2a6cf0" strokeWidth="3" />

    {/* slots */}
    <Q pts="563,563 615,535 625,540 573,569" fill="#0c0c90" />
    <polygon points="572,568 621,541 610,538 565,563" fill="#fff" />
    <path d="M565,560 L612,535" stroke="#0a0a70" strokeWidth="5" strokeDasharray="3 2.2" />
    <Q pts="689,522 707,515 737,535 723,543" fill="#1c1cd0" stroke="#050540" />
    <path d="M723,543 L737,535 L736,532" stroke="#050540" fill="none" strokeWidth="1" />
    <Q pts="556,610 572,608 592,619 580,626" fill="#1c1cd0" stroke="#050540" />

    {/* load arrows */}
    <rect x="667" y="530" width="10" height="46" rx="5" fill="#0b5ad0" />
    <rect x="670" y="531" width="3" height="44" rx="1.5" fill="#1878e0" />
    <polygon points="661,575 683,575 672,593" fill="#08108c" />
    <ellipse cx="672" cy="576" rx="11" ry="4" fill="#0a3cb8" />
    <rect x="710" y="569" width="11" height="44" rx="5" fill="#b08800" />
    <rect x="713" y="570" width="3" height="42" rx="1.5" fill="#c89c10" />
    <polygon points="704,612 727,612 715.5,633" fill="#9a7800" />
    <ellipse cx="715.5" cy="613" rx="11.5" ry="5" fill="#b08800" />

    {/* min marker */}
    <path d="M672,478 L676,490" stroke="#333" strokeWidth=".7" />
    <circle cx="676.5" cy="490.5" r="3" fill="#2f9a40" />
  </Scene>
);

const Cube = () => (
  <CubeWrap width="96" height="112" viewBox="1410 142 96 112">
    <defs>
      <radialGradient id="shadow">
        <stop offset="0" stopColor="#000" stopOpacity=".3" />
        <stop offset="1" stopColor="#000" stopOpacity="0" />
      </radialGradient>
      <linearGradient id="cubeL" x1="0" x2="1" y1="0" y2="1">
        <stop offset="0" stopColor="#f4f4f4" />
        <stop offset="1" stopColor="#dcdcdc" />
      </linearGradient>
    </defs>
    <ellipse cx="1458" cy="232" rx="38" ry="18" fill="url(#shadow)" />
    <path d="M1458,165 V157" stroke="#8a8aee" strokeWidth="1.5" />
    <path d="M1427,218 L1420,222" stroke="#f0a0a8" strokeWidth="1.5" />
    <path d="M1490,218 L1497,222" stroke="#a8eeb0" strokeWidth="1.5" />
    <polygon points="1458,165 1493,180 1458,200 1423,180" fill="#f2f2f2" stroke="#888" />
    <polygon points="1423,180 1458,200 1458,241 1427,218" fill="url(#cubeL)" stroke="#888" />
    <polygon points="1493,180 1458,200 1458,241 1490,218" fill="#e4e4e4" stroke="#888" />
    <g fontFamily="Liberation Sans" fill="#888" fontSize="9.5">
      <text transform="matrix(-.87,.47,-.87,-.47,1467,183)">TOP</text>
      <text transform="matrix(.87,.47,0,1,1429,206)">RIGHT</text>
      <text transform="matrix(.87,-.5,0,1,1467,222)">BACK</text>
    </g>
    <g fontFamily="Liberation Sans" fontSize="14">
      <text x="1453.5" y="157" fill="#8a8aee">Z</text>
      <text x="1411" y="231" fill="#f0a0a8">X</text>
      <text x="1497" y="230" fill="#a8eeb0">Y</text>
    </g>
  </CubeWrap>
);

const ticks = [
  [0, true], [15, false], [40, true], [65, false], [90, true], [115, false],
  [140, true], [165, false], [190, true], [215, false], [240, true],
];

const NavIcons = () => (
  <NavBar>
    <NavItem $mr={4}>
      <Svg w={18} h={18}>
        <ellipse cx="9" cy="9" rx="8" ry="3.5" fill="none" stroke="#555" />
        <ellipse cx="9" cy="9" rx="4" ry="8" fill="#fff" stroke="#555" />
        <path d="M7 9 H11 M9 7 V11" stroke="#1186d8" />
      </Svg>
    </NavItem>
    <NavItem $mr={6}><Caret $ml={0} /></NavItem>
    <NavItem $mr={9}>
      <Svg w={16} h={15}>
        <path d="M1 5 H15 V15 H1Z M3 5 L12 1 L13 5" fill="#fff" stroke="#555" />
        <rect x="3.5" y="8" width="9" height="5" fill="#ddd" stroke="#555" />
      </Svg>
    </NavItem>
    <NavItem $mr={10}><Hand size={16} color="#444" strokeWidth={1.4} /></NavItem>
    <NavItem $mr={9}>
      <Svg w={17} h={16}>
        <circle cx="6.5" cy="7.5" r="5.5" fill="#e6f2f0" stroke="#555" />
        <path d="M10.5 11.5 L14.5 15.5" stroke="#444" strokeWidth="2" />
        <path d="M11 2.5 H16 M13.5 0 V5 M11.5 7.5 H15.5" stroke="#444" />
      </Svg>
    </NavItem>
    <NavItem $mr={5}>
      <Svg w={17} h={17}>
        <rect x=".5" y=".5" width="16" height="16" fill="none" stroke="#777" strokeDasharray="2 2" />
        <circle cx="7.5" cy="7.5" r="6" fill="#e6f2f0" stroke="#555" />
        <path d="M11.5 12 L16 16.5" stroke="#444" strokeWidth="2" />
      </Svg>
    </NavItem>
    <NavItem $mr={6}><Caret $ml={0} /></NavItem>
    <NavItem $mr={1}>
      <Svg w={16} h={16}>
        <rect x=".5" y=".5" width="15" height="11.5" fill="#a8d0ee" stroke="#555" />
        <path d="M5 15 H11 M8 12 V15" stroke="#555" />
      </Svg>
    </NavItem>
    <NavItem $mr={8}><Caret $ml={0} /></NavItem>
    <NavItem $mr={3}>
      <Svg w={15} h={15}>
        <rect x=".5" y=".5" width="14" height="14" fill="#ddd" stroke="#777" />
        <path d="M3.5 0 V15 M6.5 0 V15 M9.5 0 V15 M12.5 0 V15 M0 3.5 H15 M0 6.5 H15 M0 9.5 H15 M0 12.5 H15" stroke="#777" strokeWidth=".7" />
      </Svg>
    </NavItem>
    <Caret $ml={0} />
  </NavBar>
);

export default function App() {
  return (
    <Page>
      <GlobalStyle />
      <Main>
        <WindowBar>
          <WinBtn><Svg w={10} h={2}><path d="M0 1 H10" stroke="#888" /></Svg></WinBtn>
          <WinBtn>
            <Svg w={10} h={10}>
              <path d="M2.5 2.5 V.5 H9.5 V7.5 H7.5 M.5 2.5 H7.5 V9.5 H.5Z" fill="none" stroke="#888" />
            </Svg>
          </WinBtn>
          <WinBtn><Svg w={11} h={11}><path d="M.5 .5 L10.5 10.5 M10.5 .5 L.5 10.5" stroke="#777" /></Svg></WinBtn>
        </WindowBar>

        <TabBar>
          <Quick>
            <QuickItem><GridIcon /></QuickItem>
            <QuickItem $ml={19}><DocIcon /><Caret $ml={7} /></QuickItem>
            <QuickItem $ml={19}><SaveIcon /></QuickItem>
            <QuickItem $ml={19}><UndoIcon color="#555" /><Caret $ml={8} /></QuickItem>
            <QuickItem $ml={12}><UndoIcon color="#9a9a9a" flip /><Caret $ml={6} $c="#999" /></QuickItem>
          </Quick>
          <DocTab>
            <DocTitle>
              <Svg w={16} h={16}>
                <path d="M0 3 L8 0 L16 3 V11 L8 16 L3 14 L0 9Z" fill="#666" />
                <path d="M0 3 L8 6 L16 3 L8 0Z" fill="#8a8a8a" />
              </Svg>
              assembly v18
            </DocTitle>
            <CloseTab><Svg w={10} h={10}><path d="M.5 .5 L9.5 9.5 M9.5 .5 L.5 9.5" stroke="#555" strokeWidth="1.4" /></Svg></CloseTab>
          </DocTab>
          <PlusBtn><Svg w={14} h={14}><path d="M7 0 V14 M0 7 H14" stroke="#777" strokeWidth="3" /></Svg></PlusBtn>
          <TopIcons>
            <TopIcon>
              <Svg w={16} h={15}>
                <path d="M0 0 H16 V11 H14 V15 L10 11 H0Z" fill="#555" />
                <path d="M2 3 H14 M2 5.5 H14 M2 8 H10" stroke="#ddd" />
              </Svg>
            </TopIcon>
            <TopIcon>
              <Svg w={16} h={16}>
                <circle cx="8" cy="8" r="6.2" fill="none" stroke="#555" strokeWidth="3.2" />
                <path d="M8 8 L14 1" stroke="#c9c9c9" strokeWidth="3" />
                <path d="M9 3 L11 6" stroke="#555" strokeWidth="2" />
              </Svg>
            </TopIcon>
            <TopIcon>
              <Svg w={16} h={16}>
                <circle cx="8" cy="8" r="7.5" fill="none" stroke="#555" />
                <circle cx="8" cy="8" r="5.5" fill="none" stroke="#555" strokeWidth="1.6" />
                <path d="M8 4.5 V8.5 H11.5" fill="none" stroke="#555" strokeWidth="1.4" />
              </Svg>
            </TopIcon>
            <TopIcon><FaBell size={15} /><Dot /></TopIcon>
            <TopIcon><FaQuestionCircle size={16} /></TopIcon>
          </TopIcons>
          <TopIcons>
            <Avatar>TA</Avatar>
          </TopIcons>
        </TabBar>

        <Body>
          <Ribbon>
            <ModeButton>SIMULATION<Caret $ml={5} /></ModeButton>
            <RibbonBody>
              <ResultsTab>RESULTS</ResultsTab>
              <Groups>
                <Group $w={128}>
                  <IconRow $pl={1} $gap={15}><CameraIcon /><LegendIcon /><ContourIcon /></IconRow>
                  <GroupLabel $pl={13}>RESULT TOOLS<Caret /></GroupLabel>
                </Group>
                <Group $w={84}>
                  <IconRow $pl={26}><CompareIcon /></IconRow>
                  <GroupLabel $pl={14}>COMPARE<Caret /></GroupLabel>
                </Group>
                <Group $w={140}>
                  <IconRow $pl={13} $gap={15}>
                    <DeformZero /><DeformBend />
                    <Nudge $ml={-7}><DeformOne /></Nudge>
                  </IconRow>
                  <GroupLabel $pl={27}>DEFORMATION<Caret /></GroupLabel>
                </Group>
                <Group $w={79}>
                  <IconRow $pl={26}><MeshBig /></IconRow>
                  <GroupLabel $pl={14}>DISPLAY<Caret /></GroupLabel>
                </Group>
                <Group $w={79}>
                  <IconRow $pl={23}><ManageIcon /></IconRow>
                  <GroupLabel $pl={13}>MANAGE<Caret /></GroupLabel>
                </Group>
                <Group $w={140}>
                  <IconRow $pl={12} $gap={12}><InspectMap /><InspectXyz /><InspectForce /></IconRow>
                  <GroupLabel $pl={41}>INSPECT<Caret /></GroupLabel>
                </Group>
                <Group $w={77} $last>
                  <IconRow $pl={18}><SelectIcon /></IconRow>
                  <GroupLabel $pl={13}>SELECT<Caret /></GroupLabel>
                </Group>
                <Group $w={108} $on $last>
                  <IconRow $pl={38}><FinishIcon /></IconRow>
                  <GroupLabel $pl={11}>FINISH RESULTS<Caret /></GroupLabel>
                </Group>
              </Groups>
            </RibbonBody>
          </Ribbon>

          <Viewport>
            <Chair />
            <Panel>
              <PanelHead>
                <Svg w={10} h={8}>
                  <path d="M5 0 V8 L0 4Z M10 0 V8 L5 4Z" fill="#444" />
                </Svg>
                <HeadTitle $pl={9}>BROWSER</HeadTitle>
                <Svg w={9} h={9}>
                  <circle cx="4.5" cy="4.5" r="4.5" fill="#333" />
                  <path d="M2 4.5 H7" stroke="#fff" />
                </Svg>
                <Handle />
              </PanelHead>
              <Tree>
                {tree.map((row) => <TreeRow key={row.label} row={row} />)}
              </Tree>
            </Panel>

            <Pill $x={609} $y={458} $w={123} $pad={9} $bg="#8cc34a">Min: 0.001909 MPa</Pill>
            <Pill $x={448} $y={598} $w={119} $pad={15} $bg="#e95455">Max: 480.3 MPa</Pill>

            <Cube />

            <Legend>
              <LegendControls>
                <LegendRow>
                  <AlertBox>!</AlertBox>
                  <LegendBox $w={71} $pr={4}>Load Case1<Caret $ml={0} /></LegendBox>
                </LegendRow>
                <LegendBox $w={101} $pr={6}>Stress<Caret $ml={0} /></LegendBox>
                <LegendBox $w={76} $pr={5}>Von Mises<Caret $ml={0} /></LegendBox>
                <LegendBox $w={36} $pr={5}>MPa<Caret $ml={0} /></LegendBox>
                <LegendBox $w={62} $pl={6} $pr={10}>
                  <FaCog size={16} color="#666" />
                  <TriOpen />
                </LegendBox>
              </LegendControls>
              <Bar />
              <Ticks>
                {ticks.map(([y, major]) => <Tick key={y} $y={y + 2} $major={major} />)}
              </Ticks>
              <Scale>
                <ScaleText $h={40}>480.3 Max.</ScaleText>
                <ScaleText $h={50}>400</ScaleText>
                <ScaleText $h={50}>300</ScaleText>
                <ScaleText $h={50}>200</ScaleText>
                <ScaleText $h={50}>100</ScaleText>
                <ScaleText $h={15}>0 Min.</ScaleText>
              </Scale>
            </Legend>

            <NavIcons />

            <CommentsBar>
              <HeadSpacer />
              <HeadTitle $pl={9}>COMMENTS</HeadTitle>
              <Svg w={9} h={9}>
                <circle cx="4.5" cy="4.5" r="4.5" fill="#333" />
                <path d="M2 4.5 H7 M4.5 2 V7" stroke="#fff" />
              </Svg>
              <Handle />
            </CommentsBar>
          </Viewport>
        </Body>
      </Main>

      <Strip>
        <StripTop>
          <Svg w={12} h={17}>
            <path d="M0 0 H11 L12 15 H3 L0 17Z" fill="#f5cc66" />
          </Svg>
          <Svg w={2} h={16}><rect width="2" height="16" fill="#555" /></Svg>
        </StripTop>
        <StripBand>Fi</StripBand>
        <StripBack>
          <Svg w={16} h={12}>
            <path d="M16 6 H2 M7 1 L1.5 6 L7 11" fill="none" stroke="#fff" strokeWidth="1.6" />
          </Svg>
        </StripBack>
        <StripMark $y={415} $w={3} $h={17} $c="#f5d58a" />
        <StripMark $y={460} $w={4} $h={9} $r={4} $c="#1a86e0" />
        <StripMark $y={509} $w={3} $h={2} $c="#ccc" />
        <StripMark $y={610} $w={35} $h={28} $c="#333" />
        <StripMark $y={810} $w={3} $h={9} $c="#4aa0e0" />
        <StripStatus>33</StripStatus>
        <StripFoot />
      </Strip>
    </Page>
  );
}
